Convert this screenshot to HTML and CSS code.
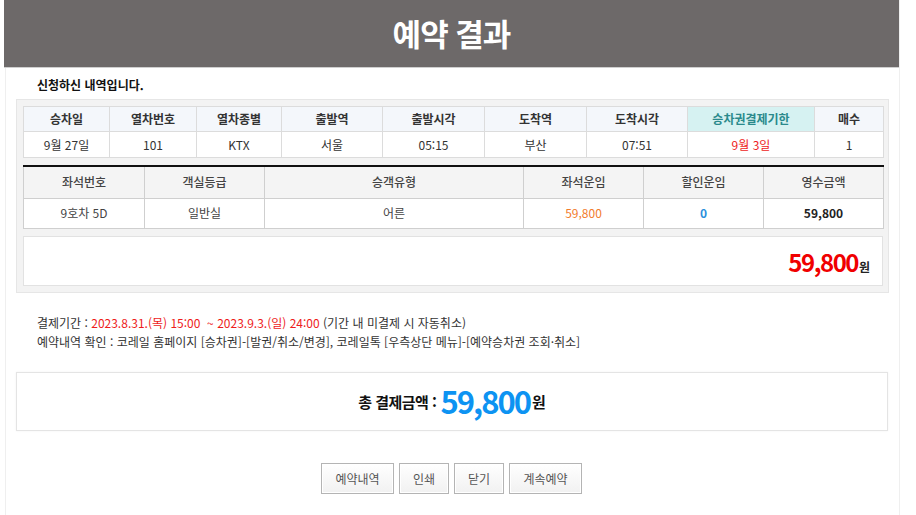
FILE: index.html
```html
<!DOCTYPE html>
<html lang="ko">
<head>
<meta charset="utf-8">
<link rel="stylesheet" href="styles.css">
</head>
<body>
<div class="page">
  <header class="top"><h1>예약 결과</h1></header>
  <div class="content">
    <p class="intro">신청하신 내역입니다.</p>
    <div class="panel">
      <table class="t1">
        <colgroup>
          <col style="width:86px"><col style="width:87px"><col style="width:85px"><col style="width:101px"><col style="width:102px"><col style="width:102px"><col style="width:101px"><col style="width:127px"><col style="width:69px">
        </colgroup>
        <thead>
          <tr><th>승차일</th><th>열차번호</th><th>열차종별</th><th>출발역</th><th>출발시각</th><th>도착역</th><th>도착시각</th><th class="hl">승차권결제기한</th><th>매수</th></tr>
        </thead>
        <tbody>
          <tr><td>9월 27일</td><td>101</td><td>KTX</td><td>서울</td><td>05:15</td><td>부산</td><td>07:51</td><td class="red">9월 3일</td><td>1</td></tr>
        </tbody>
      </table>
      <table class="t2">
        <colgroup>
          <col style="width:121px"><col style="width:120px"><col style="width:259px"><col style="width:120px"><col style="width:120px"><col style="width:120px">
        </colgroup>
        <thead>
          <tr><th>좌석번호</th><th>객실등급</th><th>승객유형</th><th>좌석운임</th><th>할인운임</th><th>영수금액</th></tr>
        </thead>
        <tbody>
          <tr><td>9호차 5D</td><td>일반실</td><td>어른</td><td class="orange">59,800</td><td class="blue">0</td><td class="bold">59,800</td></tr>
        </tbody>
      </table>
      <div class="sum"><span class="sum-num">59,800</span><span class="won">원</span></div>
    </div>
    <div class="notes">
      <p>결제기간 : <span class="red">2023.8.31.(목) 15:00 &nbsp;~ 2023.9.3.(일) 24:00</span> (기간 내 미결제 시 자동취소)</p>
      <p>예약내역 확인 : 코레일 홈페이지 [승차권]-[발권/취소/변경], 코레일톡 [우측상단 메뉴]-[예약승차권 조회·취소]</p>
    </div>
    <div class="total">
      <span class="total-label">총 결제금액 :</span><span class="total-num">59,800</span><span class="total-won">원</span>
    </div>
    <div class="buttons">
      <button class="btn w-wide">예약내역</button>
      <button class="btn w-narrow">인쇄</button>
      <button class="btn w-narrow">닫기</button>
      <button class="btn w-wide">계속예약</button>
    </div>
  </div>
</div>
</body>
</html>
```
FILE: styles.css
```css
* { box-sizing: border-box; }
html, body { margin: 0; padding: 0; background: #fff; }
body {
  font-family: "Noto Sans CJK KR", "Noto Sans", sans-serif;
  color: #333;
  font-size: 12px;
}
.page {
  margin-left: 4px;
  width: 896px;
  min-height: 515px;
  border-right: 1px solid #efefef;
}
.top {
  height: 68px;
  background: #6d6969;
  display: flex;
  align-items: center;
  justify-content: center;
  border-bottom: 1px solid #cfcfcf;
}
.top h1 {
  margin: 0 0 2px 0;
  color: #fff;
  font-size: 31px;
  font-weight: 700;
  letter-spacing: -1px;
  line-height: 1;
}
.content {
  padding: 0 0 0 10px;
  border-left: 1px solid #efefef;
  margin-left: 1px;
  min-height: 447px;
}
.intro {
  margin: 0;
  padding: 9px 0 0 21px;
  height: 31px;
  font-size: 12px;
  font-weight: 700;
  color: #111;
  line-height: 16px;
}
.panel {
  width: 873px;
  background: #f3f3f3;
  border: 1px solid #e6e6e6;
  padding: 6px;
}
table {
  border-collapse: collapse;
  table-layout: fixed;
  width: 860px;
  background: #fff;
}
th, td {
  text-align: center;
  padding: 0;
  font-size: 12px;
  line-height: 14px;
}
.t1 th, .t1 td { border: 1px solid #dcdcdc; }
.t1 th { background: #f4f7fb; height: 25px; font-weight: 700; color: #333; }
.t1 td { height: 26px; color: #333; }
.t1 th.hl { background: #d6f2f2; color: #2a8a8c; }
.t2 { margin-top: 7px; border-top: 2px solid #111; }
.t2 th, .t2 td { border: 1px solid #cfcfcf; }
.t2 thead th { border-top: 2px solid #111; }
.t2 th { background: #f4f4f4; height: 32px; font-weight: 500; color: #444; }
.t2 td { height: 30px; color: #444; }
.red, td.red { color: #ee1c1c; }
td.orange { color: #f27c2c; }
td.blue { color: #2c8fdc; font-weight: 700; }
td.bold { font-weight: 700; color: #222; }
.sum {
  margin-top: 7px;
  width: 860px;
  height: 50px;
  background: #fff;
  border: 1px solid #e2e2e2;
  display: flex;
  justify-content: flex-end;
  align-items: flex-end;
  padding: 0 12px 11px 0;
}
.sum-num {
  color: #f00000;
  font-size: 24px;
  font-weight: 700;
  line-height: 24px;
  letter-spacing: -1.5px;
}
.won {
  font-size: 12px;
  font-weight: 700;
  color: #222;
  line-height: 14px;
  margin-left: 1px;
}
.notes {
  padding: 20px 0 0 21px;
  height: 79px;
}
.notes p {
  margin: 0;
  font-size: 12px;
  line-height: 19px;
  color: #333;
}
.total {
  width: 872px;
  height: 59px;
  border: 1px solid #e4e4e4;
  box-shadow: 0 0 2px rgba(0,0,0,0.06);
  display: flex;
  align-items: center;
  justify-content: center;
}
.total-label {
  font-size: 15px;
  font-weight: 700;
  color: #111;
  letter-spacing: -0.5px;
  margin-right: 4px;
}
.total-num {
  font-size: 31px;
  font-weight: 700;
  color: #0d93f2;
  letter-spacing: -2px;
  line-height: 32px;
}
.total-won {
  font-size: 15px;
  font-weight: 700;
  color: #111;
  margin-left: 2px;
}
.buttons {
  display: flex;
  justify-content: center;
  gap: 5px;
  margin-top: 32px;
  padding-right: 12px;
}
.btn {
  height: 31px;
  border: 1px solid #b4b4b4;
  background: linear-gradient(#ffffff, #f1f1f1);
  box-shadow: inset 0 0 0 1px #fff;
  color: #555;
  font-family: "Noto Sans CJK KR", sans-serif;
  font-size: 12px;
  padding: 0;
}
.w-wide { width: 73px; }
.w-narrow { width: 50px; }
```
